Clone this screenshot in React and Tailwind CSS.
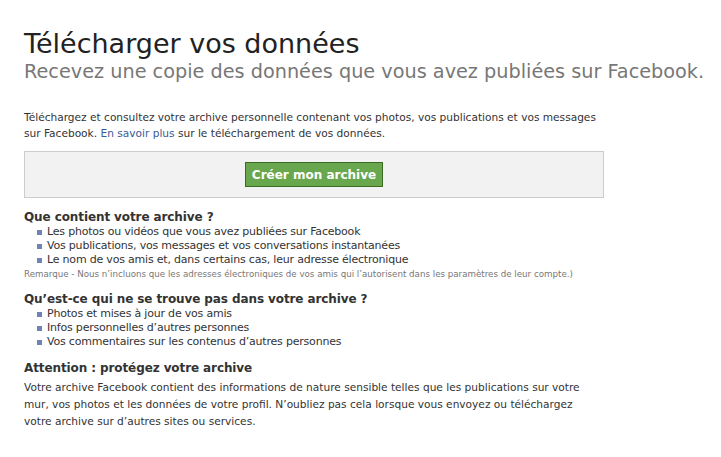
const bulletsIn = [
  "Les photos ou vidéos que vous avez publiées sur Facebook",
  "Vos publications, vos messages et vos conversations instantanées",
  "Le nom de vos amis et, dans certains cas, leur adresse électronique",
];

const bulletsOut = [
  "Photos et mises à jour de vos amis",
  "Infos personnelles d’autres personnes",
  "Vos commentaires sur les contenus d’autres personnes",
];

function BulletList({ items }) {
  return (
    <ul className="pl-[13px]">
      {items.map((item) => (
        <li key={item} className="flex items-center h-[14px] text-[11px] tracking-[-0.2px] text-[#333]">
          <span className="w-[5px] h-[5px] bg-[#6d84b4] mr-[5px] shrink-0" />
          {item}
        </li>
      ))}
    </ul>
  );
}

export default function App() {
  return (
    <div className="w-[721px] h-[457px] bg-white font-['DejaVu_Sans',sans-serif] text-[#333] px-[24px] pt-[28px]">
      <h1 className="text-[27px] leading-[32px] text-[#222] whitespace-nowrap">Télécharger vos données</h1>
      <h2 className="text-[19.25px] leading-[24px] text-[#777] whitespace-nowrap">
        Recevez une copie des données que vous avez publiées sur Facebook.
      </h2>

      <p className="mt-[25px] text-[10.6px] leading-[16px] w-[620px]">
        Téléchargez et consultez votre archive personnelle contenant vos photos, vos publications et vos messages
        <br />
        sur Facebook. <a className="text-[#3b5998]">En savoir plus</a> sur le téléchargement de vos données.
      </p>

      <div className="mt-[10px] w-[580px] h-[47px] bg-[#f2f2f2] border border-[#ccc] flex items-center justify-center">
        <button className="h-[25px] px-[6px] bg-[#69a74e] border border-[#3b6e22] text-white font-bold text-[12px]">
          Créer mon archive
        </button>
      </div>

      <h3 className="mt-[11px] font-bold text-[12px] tracking-[-0.1px] leading-[16px]">Que contient votre archive ?</h3>
      <BulletList items={bulletsIn} />
      <p className="text-[8.7px] leading-[14px] text-[#777]">
        Remarque - Nous n’incluons que les adresses électroniques de vos amis qui l’autorisent dans les paramètres de leur compte.)
      </p>

      <h3 className="mt-[10px] font-bold text-[12px] tracking-[-0.1px] leading-[16px]">Qu’est-ce qui ne se trouve pas dans votre archive ?</h3>
      <BulletList items={bulletsOut} />

      <h3 className="mt-[10px] font-bold text-[12px] tracking-[-0.1px] leading-[18px]">Attention : protégez votre archive</h3>
      <p className="mt-[2px] text-[10.6px] leading-[17px] w-[600px]">
        Votre archive Facebook contient des informations de nature sensible telles que les publications sur votre
        <br />
        mur, vos photos et les données de votre profil. N’oubliez pas cela lorsque vous envoyez ou téléchargez
        <br />
        votre archive sur d’autres sites ou services.
      </p>
    </div>
  );
}
